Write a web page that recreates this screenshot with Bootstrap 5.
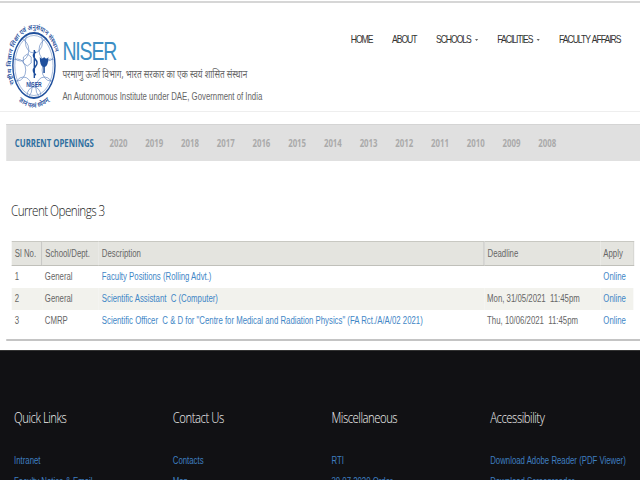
<!DOCTYPE html>
<html lang="en">
<head>
    <meta charset="UTF-8">
    <meta name="viewport" content="width=device-width, initial-scale=1.0">
    <title>NISER Current Openings</title>
    <link href="https://cdn.jsdelivr.net/npm/bootstrap@5.3.0/dist/css/bootstrap.min.css" rel="stylesheet">
    <style>
        html, body { height: 480px; overflow: hidden; }
        body { font-family: "Liberation Sans", Arial, sans-serif; color: #555; background: #fff; }
        /* the reference page is squeezed sideways, so lay out wider and scale the whole sheet */
        .sheet { width: 820.5px; height: 480px; overflow: hidden; transform: scaleX(.78); transform-origin: 0 0; }
        .top-rule { height: 3px; border-top: 1px solid #fff; border-bottom: 2px solid #d6d6d6; }
        .site-head { height: 109px; border-bottom: 1px solid #eee; padding-left: 10px; }
        .logo-box { width: 67px; margin-top: 22px; flex: none; }
        .logo-box svg { overflow: visible; display: block; }
        .brand-box { margin-left: 3px; padding-top: 33px; white-space: nowrap; }
        .brand-name { font-size: 25px; line-height: 30px; color: #3b8ec4; letter-spacing: -1.5px; }
        .brand-hi { font-family: "Noto Sans", "Liberation Sans", sans-serif; font-size: 10.5px; line-height: 14px; color: #666; margin-top: 1px; }
        .brand-en { font-size: 10px; line-height: 14px; color: #666; margin-top: 9px; }
        .main-nav { margin-left: auto; padding-top: 29px; padding-right: 25px; gap: 25px; }
        .main-nav a { font-size: 11px; color: #333; text-decoration: none; letter-spacing: -1.3px; word-spacing: 1.5px; line-height: 14px; white-space: nowrap; }
        .main-nav a.drop::after { content: ""; display: inline-block; margin-left: 5px; vertical-align: 2px; border-top: 2px solid #666; border-left: 2px solid transparent; border-right: 2px solid transparent; }
        .year-band { margin: 12px 0 0 8px; height: 37px; background: #e0e0e0; border-top: 1px solid #d4d4d4; padding-left: 11px; }
        .year-band a { font-family: "Open Sans", sans-serif; font-size: 10px; font-weight: 700; color: #aaa; text-decoration: none; width: 45.8px; }
        .year-band a.on { color: #2f6f9f; width: 121.5px; white-space: nowrap; }
        .page-title { font-family: "Open Sans", sans-serif; font-weight: 300; font-size: 15px; color: #222; margin: 39px 0 0 14px; line-height: 20px; letter-spacing: -.7px; }
        .jobs { margin: 21px 0 0 15px; width: 797px; table-layout: fixed; border-collapse: collapse; font-size: 10px; }
        .jobs th { font-weight: 400; height: 24px; background: #e4e4df; border-top: 1px solid #c8c8c2; border-bottom: 1px solid #c0c0ba; padding: 0 4px; color: #666; white-space: nowrap; }
        .jobs th.ln { border-left: 1px solid #bbb; }
        .jobs th:last-child { border-right: 1px solid #c8c8c2; }
        .jobs td { height: 22px; padding: 0 4px; color: #666; white-space: nowrap; }
        .jobs th:nth-child(3), .jobs td:nth-child(3) { padding-left: 5px; }
        .jobs tr.alt td { background: #f2f2ed; }
        .jobs a { color: #3f86c6; text-decoration: none; }
        .end-rule { margin: 7px 0 0 8px; height: 2px; background: #c4c4c4; }
        .site-foot { margin-top: 9px; height: 200px; background: #111114; border-top: 1px solid #333; padding: 57px 0 0 18px; }
        .foot-col { width: 203.5px; flex: none; }
        .foot-col h5 { font-family: "Open Sans", sans-serif; font-weight: 300; font-size: 14.5px; line-height: 20px; color: #f2f2f2; margin: 0 0 22px; letter-spacing: -.6px; }
        .foot-col a { display: block; font-size: 10px; line-height: 21px; color: #3f7fc0; text-decoration: none; white-space: nowrap; }
    </style>
</head>
<body>
<div class="sheet">
    <div class="top-rule"></div>
    <div class="site-head d-flex">
        <div class="logo-box">
            <svg width="67" height="92" viewBox="0 0 67 92" fill="none">
                <defs>
                    <path id="ringtext" d="M8 58.5 A29.5 36 0 1 1 59 58.5"></path>
                    <path id="ringfoot" d="M12 74 Q33.5 92 55 74"></path>
                    <clipPath id="ringclip"><ellipse cx="33.5" cy="40.5" rx="26" ry="32"></ellipse></clipPath>
                </defs>
                <ellipse cx="33.5" cy="40.5" rx="27" ry="32.5" stroke="#1f4f9c" stroke-width="1.8"></ellipse>
                <ellipse cx="33.5" cy="40.5" rx="24.5" ry="30" stroke="#5a80bd" stroke-width=".6"></ellipse>
                <g stroke="#5a80bd" stroke-width=".7" clip-path="url(#ringclip)">
                    <circle cx="33.5" cy="17" r="11"></circle><circle cx="16" cy="25" r="11"></circle><circle cx="51" cy="25" r="11"></circle>
                    <circle cx="12" cy="45" r="11"></circle><circle cx="55" cy="45" r="11"></circle>
                    <circle cx="20" cy="63" r="11"></circle><circle cx="47" cy="63" r="11"></circle><circle cx="33.5" cy="71" r="9"></circle>
                </g>
                <path d="M20 32 l5 -3 l5 3 v6 l-5 3 l-5 -3z" stroke="#5a80bd" stroke-width=".7"></path>
                <path d="M36 27 Q30 30 35 34 Q40 38 35 42 Q30 46 36 50 M34 25 V53" stroke="#1f4f9c" stroke-width="1.8"></path>
                <path d="M41 32 q3 3 5.5 0 q3 3 5.5 0 q0 9 -4.5 10 v6 h-2 v-6 q-4.500 -1 -4.500 -10z" fill="#1f4f9c"></path>
                <text x="33.5" y="62" text-anchor="middle" font-size="6.5" font-weight="700" font-family="Liberation Sans" fill="#1f4f9c">NISER</text>
                <text font-size="7" font-weight="600" font-family="Noto Sans" fill="#1f4f9c"><textPath href="#ringtext">राष्ट्रीय विज्ञान शिक्षा एवं अनुसंधान संस्थान</textPath></text>
                <text font-size="7" font-weight="600" font-family="Noto Sans" fill="#1f4f9c" text-anchor="middle"><textPath href="#ringfoot" startOffset="50%">ज्ञानं परमं ध्येयम्</textPath></text>
            </svg>
        </div>
        <div class="brand-box">
            <div class="brand-name">NISER</div>
            <div class="brand-hi">परमाणु ऊर्जा विभाग, भारत सरकार का एक स्वयं शासित संस्थान</div>
            <div class="brand-en">An Autonomous Institute under DAE, Government of India</div>
        </div>
        <nav class="main-nav d-flex align-items-start">
            <a href="#">HOME</a>
            <a href="#">ABOUT</a>
            <a href="#" class="drop">SCHOOLS</a>
            <a href="#" class="drop">FACILITIES</a>
            <a href="#">FACULTY AFFAIRS</a>
        </nav>
    </div>
    <div class="year-band d-flex align-items-center">
        <a href="#" class="on">CURRENT OPENINGS</a>
        <a href="#">2020</a><a href="#">2019</a><a href="#">2018</a><a href="#">2017</a><a href="#">2016</a><a href="#">2015</a><a href="#">2014</a><a href="#">2013</a><a href="#">2012</a><a href="#">2011</a><a href="#">2010</a><a href="#">2009</a><a href="#">2008</a>
    </div>
    <div class="page-title">Current Openings 3</div>
    <table class="jobs">
        <colgroup><col style="width:38.5px"><col style="width:72px"><col style="width:495px"><col style="width:149px"><col style="width:42.5px"></colgroup>
        <thead><tr><th>Sl No.</th><th class="ln">School/Dept.</th><th>Description</th><th class="ln">Deadline</th><th>Apply</th></tr></thead>
        <tbody>
            <tr><td>1</td><td>General</td><td><a href="#">Faculty Positions (Rolling Advt.)</a></td><td></td><td><a href="#">Online</a></td></tr>
            <tr class="alt"><td>2</td><td>General</td><td><a href="#">Scientific Assistant&nbsp; C (Computer)</a></td><td>Mon, 31/05/2021&nbsp; 11:45pm</td><td><a href="#">Online</a></td></tr>
            <tr><td>3</td><td>CMRP</td><td><a href="#">Scientific Officer&nbsp; C &amp; D for "Centre for Medical and Radiation Physics" (FA Rct./A/A/02 2021)</a></td><td>Thu, 10/06/2021&nbsp; 11:45pm</td><td><a href="#">Online</a></td></tr>
        </tbody>
    </table>
    <div class="end-rule"></div>
    <footer class="site-foot d-flex">
        <div class="foot-col"><h5>Quick Links</h5><a href="#">Intranet</a><a href="#">Faculty Notice &amp; Email</a></div>
        <div class="foot-col"><h5>Contact Us</h5><a href="#">Contacts</a><a href="#">Map</a></div>
        <div class="foot-col"><h5>Miscellaneous</h5><a href="#">RTI</a><a href="#">30.07.2020 Order</a></div>
        <div class="foot-col"><h5>Accessibility</h5><a href="#">Download Adobe Reader (PDF Viewer)</a><a href="#">Download Screenreader</a></div>
    </footer>
</div>
</body>
</html>
